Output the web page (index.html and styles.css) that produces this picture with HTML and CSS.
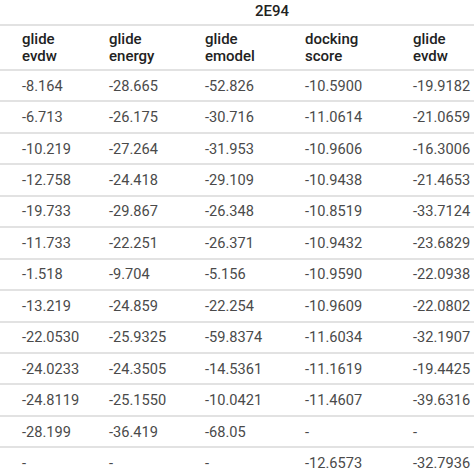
FILE: index.html
```html
<!DOCTYPE html>
<html>
<head>
<meta charset="utf-8">
<link rel="stylesheet" href="styles.css">
</head>
<body>
<div class="wrap">
<div class="title-row"><span class="title">2E94</span></div>
<table class="grid">
<colgroup><col class="c1"><col class="c2"><col class="c3"><col class="c4"><col class="c5"></colgroup>
<thead>
<tr><th>glide<br>evdw</th><th>glide<br>energy</th><th>glide<br>emodel</th><th>docking<br>score</th><th>glide<br>evdw</th></tr>
</thead>
<tbody>
<tr><td>-8.164</td><td>-28.665</td><td>-52.826</td><td>-10.5900</td><td>-19.9182</td></tr>
<tr><td>-6.713</td><td>-26.175</td><td>-30.716</td><td>-11.0614</td><td>-21.0659</td></tr>
<tr><td>-10.219</td><td>-27.264</td><td>-31.953</td><td>-10.9606</td><td>-16.3006</td></tr>
<tr><td>-12.758</td><td>-24.418</td><td>-29.109</td><td>-10.9438</td><td>-21.4653</td></tr>
<tr><td>-19.733</td><td>-29.867</td><td>-26.348</td><td>-10.8519</td><td>-33.7124</td></tr>
<tr><td>-11.733</td><td>-22.251</td><td>-26.371</td><td>-10.9432</td><td>-23.6829</td></tr>
<tr><td>-1.518</td><td>-9.704</td><td>-5.156</td><td>-10.9590</td><td>-22.0938</td></tr>
<tr><td>-13.219</td><td>-24.859</td><td>-22.254</td><td>-10.9609</td><td>-22.0802</td></tr>
<tr><td>-22.0530</td><td>-25.9325</td><td>-59.8374</td><td>-11.6034</td><td>-32.1907</td></tr>
<tr><td>-24.0233</td><td>-24.3505</td><td>-14.5361</td><td>-11.1619</td><td>-19.4425</td></tr>
<tr><td>-24.8119</td><td>-25.1550</td><td>-10.0421</td><td>-11.4607</td><td>-39.6316</td></tr>
<tr><td>-28.199</td><td>-36.419</td><td>-68.05</td><td>-</td><td>-</td></tr>
<tr><td>-</td><td>-</td><td>-</td><td>-12.6573</td><td>-32.7936</td></tr>
</tbody>
</table>
</div>
</body>
</html>
```
FILE: styles.css
```css
html, body {
  margin: 0;
  padding: 0;
  background: #ffffff;
  overflow: hidden;
}
body {
  font-family: Roboto, "Noto Sans", sans-serif;
  color: #4a4a4a;
}
.wrap {
  width: 474px;
  overflow: hidden;
}
.title-row {
  height: 24px;
  padding-left: 255px;
  box-sizing: border-box;
  display: flex;
  align-items: center;
}
.title {
  font-size: 15px;
  font-weight: 500;
  color: #222;
  line-height: 18px;
  margin-top: -3px;
}
.grid {
  width: 540px;
  table-layout: fixed;
  border-collapse: collapse;
  font-size: 14.6px;
}
.c1 { width: 109px; }
.c2 { width: 96px; }
.c3 { width: 100px; }
.c4 { width: 108px; }
.c5 { width: 127px; }
.grid th {
  text-align: left;
  font-weight: 500;
  color: #222;
  font-size: 15px;
  line-height: 17px;
  height: 45px;
  padding: 1px 0 0 0;
  vertical-align: middle;
  border-top: 2px solid #e2e2e2;
  box-sizing: border-box;
}
.grid td {
  padding: 0;
  height: 31.45px;
  line-height: 16px;
  vertical-align: middle;
  border-top: 2px solid #e2e2e2;
  box-sizing: border-box;
  white-space: nowrap;
}
.grid th:first-child, .grid td:first-child {
  padding-left: 22px;
}
```
